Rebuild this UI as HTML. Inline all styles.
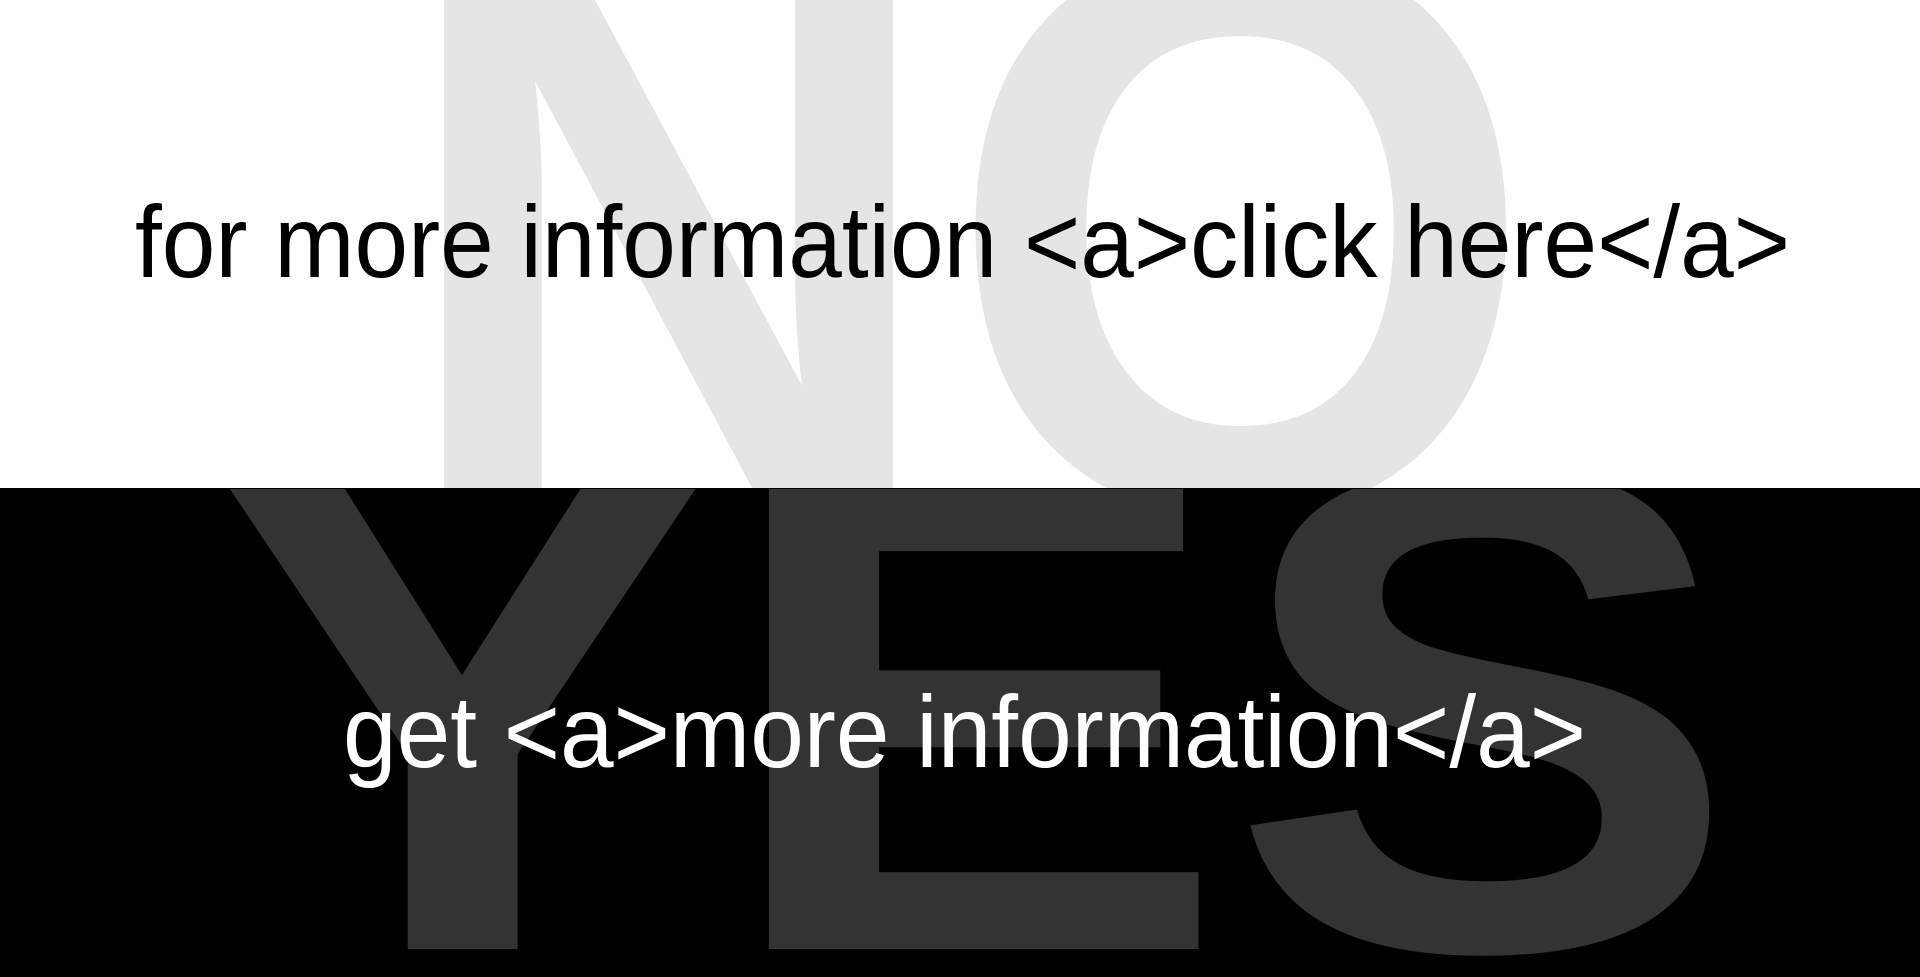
<!DOCTYPE html>
<html><head><meta charset="utf-8"><style>
html,body{margin:0;padding:0;width:1920px;height:977px;overflow:hidden;background:#000}
svg{display:block}
</style></head><body>
<svg width="1920" height="977" viewBox="0 0 1920 977" xmlns="http://www.w3.org/2000/svg">
<defs>
<clipPath id="top"><rect x="0" y="0" width="1920" height="488"/></clipPath>
<clipPath id="bot"><rect x="0" y="489" width="1920" height="488"/></clipPath>
</defs>
<rect x="0" y="0" width="1920" height="488" fill="#fff"/>
<rect x="0" y="489" width="1920" height="488" fill="#000"/>
<g clip-path="url(#top)">
<text x="393" y="510" font-family="Liberation Sans, sans-serif" font-weight="bold" font-size="810" fill="#e5e5e5" textLength="1145" lengthAdjust="spacingAndGlyphs">NO</text>
</g>
<g clip-path="url(#bot)">
<text x="207" y="949" font-family="Liberation Sans, sans-serif" font-weight="bold" font-size="690" fill="#333" textLength="1532" lengthAdjust="spacingAndGlyphs">YES</text>
</g>
<text x="135" y="277" font-family="Liberation Sans, sans-serif" font-size="102" fill="#000" textLength="1655" lengthAdjust="spacingAndGlyphs">for more information &lt;a&gt;click here&lt;/a&gt;</text>
<text x="343" y="767" font-family="Liberation Sans, sans-serif" font-size="102" fill="#fff" textLength="1243" lengthAdjust="spacingAndGlyphs">get &lt;a&gt;more information&lt;/a&gt;</text>
</svg>
</body></html>
